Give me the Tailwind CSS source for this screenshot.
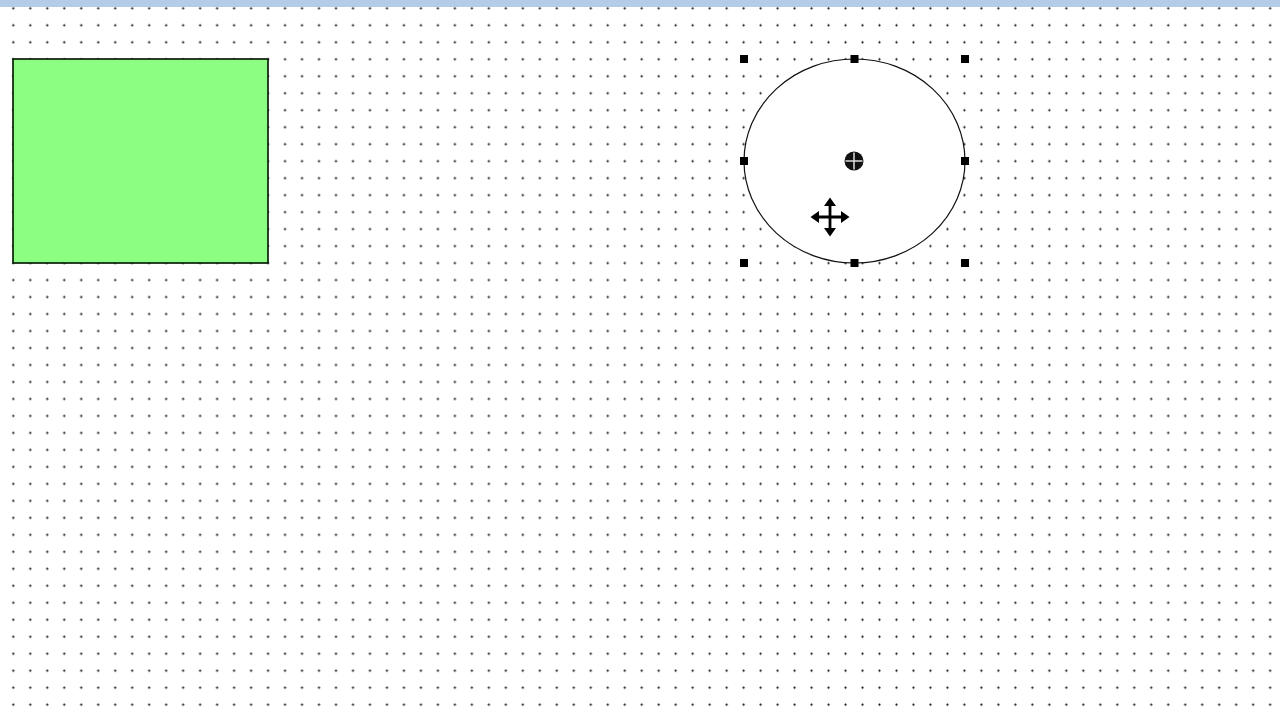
<!DOCTYPE html>
<html>
<head>
<meta charset="utf-8">
<script src="https://cdn.jsdelivr.net/npm/@tailwindcss/browser@4"></script>
</head>
<body class="w-[1280px] h-[720px] overflow-hidden bg-white">
<div class="relative w-[1280px] h-[720px] overflow-hidden flex flex-col">
  <div class="h-[7px] shrink-0 bg-[#b5cce8]"></div>
  <div class="flex-1 bg-[radial-gradient(circle_at_center,#111_0,#222_0.8px,rgba(90,90,90,0.3)_1.2px,transparent_1.6px)] bg-[size:16.985px_16.985px] bg-[position:4.8px_-7.2px]"></div>
  <svg class="absolute left-0 top-0" width="1280" height="720" viewBox="0 0 1280 720" fill="none">
    <rect x="13" y="59" width="255" height="204" fill="#8cff82" stroke="#0a1f0a" stroke-width="1.7"/>
    <ellipse cx="854.5" cy="161" rx="110.5" ry="102" fill="#fff" stroke="#111" stroke-width="1.2"/>
    <g fill="#000">
      <rect x="740" y="55" width="8" height="8"/>
      <rect x="850.5" y="55" width="8" height="8"/>
      <rect x="961" y="55" width="8" height="8"/>
      <rect x="740" y="157" width="8" height="8"/>
      <rect x="961" y="157" width="8" height="8"/>
      <rect x="740" y="259" width="8" height="8"/>
      <rect x="850.5" y="259" width="8" height="8"/>
      <rect x="961" y="259" width="8" height="8"/>
    </g>
    <circle cx="854" cy="161" r="9.5" fill="#111"/>
    <path d="M854 152.5V169.5M845.5 161H862.5" stroke="#ddd" stroke-width="1.5"/>
    <path d="M830 203V231M816 217H844" stroke="#000" stroke-width="2.8"/>
    <path d="M830 197.5L836 206H824ZM830 236.5L836 228H824ZM810.5 217L819 211V223ZM849.5 217L841 211V223Z" fill="#000"/>
  </svg>
</div>
</body>
</html>
